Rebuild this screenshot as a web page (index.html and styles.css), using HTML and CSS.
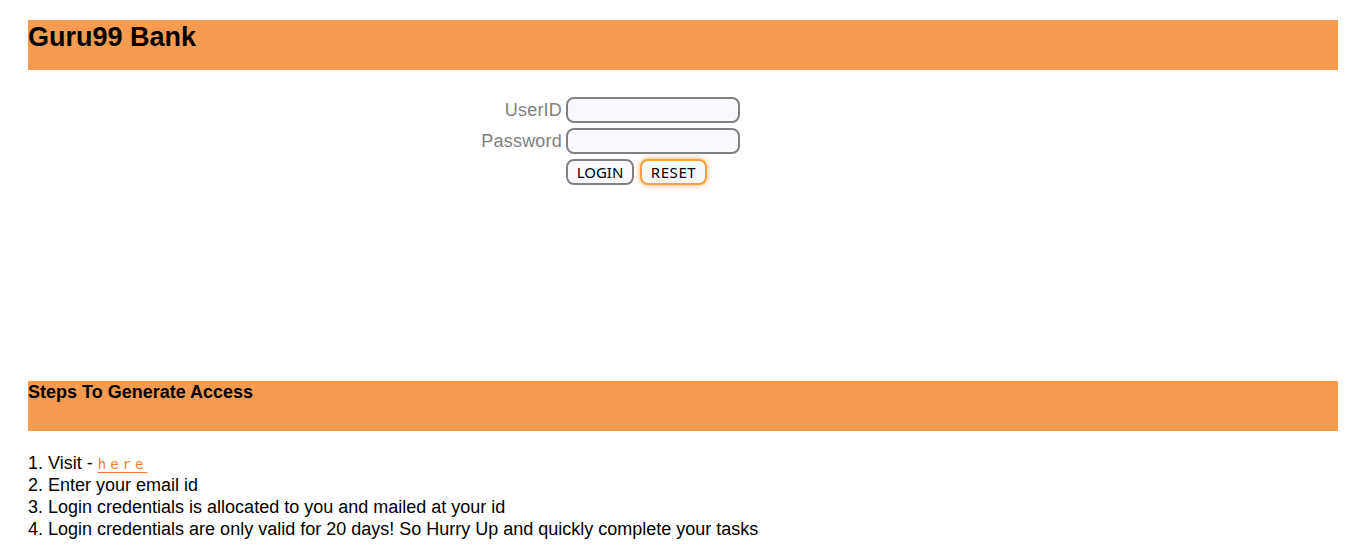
FILE: index.html
```html
<!DOCTYPE html>
<html>
<head>
<meta charset="utf-8">
<link rel="stylesheet" href="styles.css">
</head>
<body>
<div class="page">
  <div class="banner"><h1 class="brand">Guru99 Bank</h1></div>
  <form class="login">
    <label class="lbl" for="uid">UserID</label>
    <input class="field" id="uid" type="text">
    <label class="lbl" for="pwd">Password</label>
    <input class="field" id="pwd" type="password">
    <span></span>
    <div class="btns">
      <button type="button" class="btn btn-login">LOGIN</button>
      <button type="button" class="btn btn-reset">RESET</button>
    </div>
  </form>
  <div class="banner steps-banner"><h2 class="steps-title">Steps To Generate Access</h2></div>
  <ol class="steps">
    <li>1. Visit - <a class="here" href="#">here</a></li>
    <li>2. Enter your email id</li>
    <li>3. Login credentials is allocated to you and mailed at your id</li>
    <li>4. Login credentials are only valid for 20 days! So Hurry Up and quickly complete your tasks</li>
  </ol>
</div>
</body>
</html>
```
FILE: styles.css
```css
html, body { margin: 0; padding: 0; background: #fff; }
body { font-family: "Liberation Sans", Arial, sans-serif; color: #000; }
.page { padding: 20px 28px 0 28px; }
.banner { background: #f79b51; height: 50px; }
.brand { margin: 0; font-size: 27px; font-weight: bold; line-height: 34px; }
.login {
  display: grid;
  grid-template-columns: 534px 174px;
  column-gap: 4px;
  row-gap: 5px;
  align-items: center;
  margin-top: 27px;
}
.lbl { text-align: right; font-size: 18px; letter-spacing: 0.2px; color: #808080; }
.field {
  box-sizing: border-box;
  width: 174px; height: 26px;
  border: 2px solid #808080;
  border-radius: 8px;
  background: #f8f8ff;
  padding: 0 6px;
  margin: 0;
}
.btns { display: flex; gap: 6px; }
.btn {
  box-sizing: border-box;
  height: 26px;
  padding: 0;
  border: 2px solid #808080;
  border-radius: 8px;
  background: #f8f8ff;
  font-family: "Noto Sans", "Open Sans", sans-serif;
  font-size: 15px;
  color: #000;
  line-height: 20px;
  text-align: center;
}
.btn-login { width: 68px; }
.btn-reset { width: 67px; border-color: #f9a03f; box-shadow: 0 0 5px 1px rgba(249,160,63,0.6); letter-spacing: 0.6px; }
.steps-banner { margin-top: 196px; }
.steps-title { margin: 0; font-size: 18px; font-weight: bold; line-height: 22px; }
.steps { list-style: none; margin: 21px 0 0 0; padding: 0; font-size: 18px; line-height: 22px; }
.here {
  color: #ee7d33;
  font-family: "DejaVu Sans Mono", monospace;
  font-size: 14px;
  line-height: 14px;
  letter-spacing: 4px;
  text-decoration: underline;
  text-underline-offset: 3px;
}
```
